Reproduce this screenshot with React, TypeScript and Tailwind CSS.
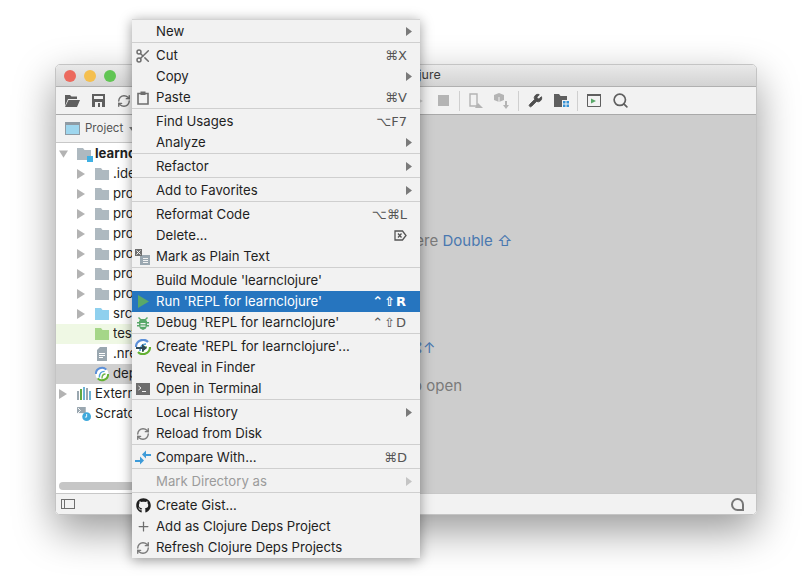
import { Plus, RefreshCw, Scissors, Search, Wrench } from 'lucide-react';
import { FaGithub } from 'react-icons/fa';
import type { ReactNode } from 'react';

const Folder = ({ color = '#aeb9c0' }: { color?: string }) => (
  <svg width="14" height="12" viewBox="0 0 14 12"><path d="M0 0h6l1.5 2H14v10H0z" fill={color} /></svg>
);

const Chevron = ({ color = '#b3b3b3' }: { color?: string }) => (
  <svg width="9" height="10" viewBox="0 0 9 10"><path d="M0 0l8 5-8 5z" fill={color} /></svg>
);

const SubArrow = ({ color }: { color: string }) => (
  <svg className="-mr-[5px]" width="6" height="9" viewBox="0 0 6 9"><path d="M0 0l6 4.500L0 9z" fill={color} /></svg>
);

const ClojureIcon = ({ arrow }: { arrow?: boolean }) => (
  <svg width="16" height="16" viewBox="0 0 16 16">
    <circle cx="8" cy="8" r="7.5" fill="#fff" />
    <path d="M1 8a7 7 0 0 1 12-5" stroke="#5b8fd8" strokeWidth="2.2" fill="none" />
    <path d="M15 8a7 7 0 0 1-12 5" stroke="#63b132" strokeWidth="2.2" fill="none" />
    <path d="M5 12c0-5 3-7 6-7" stroke="#4f9fd8" strokeWidth="1.6" fill="none" />
    <path d="M8 13c0-3 1-5 4-5" stroke="#70b84a" strokeWidth="1.6" fill="none" />
    {arrow && <path d="M1 8h6V5l5 4-5 4v-3H1z" fill="#2f4a57" />}
  </svg>
);

const BugIcon = () => (
  <svg width="14" height="14" viewBox="0 0 14 14">
    <path d="M3 1l2 2h4l2-2 1 1-2 2 1 1v1h2v1.500h-2V9h2v1.500h-2.300L10 12.500 7 14l-3-1.500-.7-2H1V9h2V7.500H1V6h2V5l1-1-2-2z" fill="#59a869" />
    <path d="M4.500 7h5v1.200h-5zM4.500 9.500h5v1.200h-5z" fill="#f2f2f2" />
  </svg>
);

const CompareIcon = () => (
  <svg width="16" height="15" viewBox="0 0 16 15">
    <path d="M0 10h5V6.500l4 4-4 4V12H0z" fill="#3d9bd9" />
    <path d="M16 4h-5V0.500l-4 4 4 4V6h5z" fill="#3d9bd9" />
  </svg>
);

const PasteIcon = () => (
  <svg width="12" height="14" viewBox="0 0 12 14">
    <path d="M1 2.500h10v10.500H1z" fill="none" stroke="#6e6e6e" strokeWidth="1.600" />
    <path d="M3.500 0.500h5v3.500h-5z" fill="#6e6e6e" />
  </svg>
);

const PlainTextIcon = () => (
  <svg width="16" height="16" viewBox="0 0 16 16">
    <path d="M5 6h10v10H5z" fill="#9aa7b0" />
    <path d="M0 0h7v7H0z" fill="#6e6e6e" />
    <path d="M1.500 1.500l4 4m0-4l-4 4" stroke="#f2f2f2" strokeWidth="1" />
    <path d="M8 9h5v1H8zM8 11h5v1H8zM8 13h5v1H8z" fill="#f2f2f2" />
  </svg>
);

const TerminalIcon = () => (
  <svg width="14" height="12" viewBox="0 0 14 12">
    <path d="M0 0h14v12H0z" fill="#6e6e6e" />
    <path d="M2.500 3l2.500 2-2.500 2M6 8.500h4" stroke="#f2f2f2" strokeWidth="1" fill="none" />
  </svg>
);

const DeleteKey = () => (
  <svg width="13" height="11" viewBox="0 0 13 11">
    <path d="M1 1h7.500L12 5.500 8.500 10H1z" fill="none" stroke="#555555" strokeWidth="1.300" />
    <path d="M4 3.500l3.500 4m0-4L4 7.500" stroke="#555555" strokeWidth="1.300" />
  </svg>
);

type Item = {
  label?: string;
  icon?: ReactNode;
  shortcut?: ReactNode;
  wide?: boolean;
  sub?: boolean;
  active?: boolean;
  disabled?: boolean;
};

const menuItems: Item[] = [
  { label: 'New', sub: true },
  {},
  { label: 'Cut', icon: <Scissors size={16} color="#6e6e6e" strokeWidth={2.2} />, shortcut: '⌘X' },
  { label: 'Copy', sub: true },
  { label: 'Paste', icon: <PasteIcon />, shortcut: '⌘V' },
  {},
  { label: 'Find Usages', shortcut: '⌥F7' },
  { label: 'Analyze', sub: true },
  {},
  { label: 'Refactor', sub: true },
  {},
  { label: 'Add to Favorites', sub: true },
  {},
  { label: 'Reformat Code', shortcut: '⌥⌘L' },
  { label: 'Delete...', shortcut: <DeleteKey /> },
  { label: 'Mark as Plain Text', icon: <PlainTextIcon /> },
  {},
  { label: "Build Module 'learnclojure'" },
  {
    label: "Run 'REPL for learnclojure'",
    active: true,
    wide: true,
    shortcut: '⌃⇧R',
    icon: <svg width="11" height="13" viewBox="0 0 11 13"><path d="M0 0l11 6.500L0 13z" fill="#59a869" /></svg>,
  },
  { label: "Debug 'REPL for learnclojure'", icon: <BugIcon />, shortcut: '⌃⇧D', wide: true },
  {},
  { label: "Create 'REPL for learnclojure'...", icon: <ClojureIcon arrow /> },
  { label: 'Reveal in Finder' },
  { label: 'Open in Terminal', icon: <TerminalIcon /> },
  {},
  { label: 'Local History', sub: true },
  { label: 'Reload from Disk', icon: <RefreshCw size={14} color="#7a7a7a" strokeWidth={2.4} /> },
  {},
  { label: 'Compare With...', icon: <CompareIcon />, shortcut: '⌘D' },
  {},
  { label: 'Mark Directory as', sub: true, disabled: true },
  {},
  { label: 'Create Gist...', icon: <FaGithub size={15} color="#1f1f1f" /> },
  { label: 'Add as Clojure Deps Project', icon: <Plus size={15} color="#6e6e6e" strokeWidth={2} /> },
  { label: 'Refresh Clojure Deps Projects', icon: <RefreshCw size={14} color="#7a7a7a" strokeWidth={2.4} /> },
];

function MenuRow({ item }: { item: Item }) {
  if (!item.label) {
    return <div className="mb-[2px] h-px bg-[#cfcfcf]" />;
  }
  const tone = item.active ? 'bg-[#2675bf] text-white' : item.disabled ? 'text-[#9b9b9b]' : 'text-[#1f1f1f]';
  return (
    <div className={`flex h-[21px] items-center pr-[13px] ${tone}`}>
      <span className="flex w-6 shrink-0 items-center justify-center pr-[2px]">{item.icon}</span>
      <span className="flex-1 truncate">{item.label}</span>
      {item.shortcut && (
        <span
          className={`[font-family:'DejaVu_Sans',sans-serif] text-[13px] ${item.wide ? 'tracking-[1px]' : ''} ${item.active ? 'font-bold text-white' : 'text-[#555555]'}`}
        >
          {item.shortcut}
        </span>
      )}
      {item.sub && <SubArrow color={item.disabled ? '#c4c4c4' : '#7a7a7a'} />}
    </div>
  );
}

function TreeRow(props: {
  depth: number;
  arrow?: boolean;
  icon: ReactNode;
  label: string;
  bold?: boolean;
  open?: boolean;
  className?: string;
}) {
  const { depth, arrow, icon, label, bold, open, className } = props;
  return (
    <div className={`flex h-5 items-center ${depth ? 'pl-[21px]' : 'pl-[3px]'} ${className ?? ''}`}>
      <span className="flex w-[9px] shrink-0 justify-center">
        {arrow && (open ? (
          <svg width="10" height="9" viewBox="0 0 10 9"><path d="M0 0h10L5 8z" fill="#b3b3b3" /></svg>
        ) : <Chevron />)}
      </span>
      <span className="ml-[9px] flex w-[14px] shrink-0 items-center justify-center">{icon}</span>
      <span className={`ml-1 truncate ${bold ? 'font-bold' : ''}`}>{label}</span>
    </div>
  );
}

const Slot = ({ children }: { children?: ReactNode }) => (
  <span className="flex h-full w-[26px] shrink-0 items-center justify-center">{children}</span>
);
const ToolSep = () => <span className="mx-[3px] h-[20px] w-px shrink-0 bg-[#cfcfcf]" />;

function Toolbar() {
  return (
    <div className="flex h-7 shrink-0 items-center border-b border-[#a9a9a9] bg-[#f2f2f2] pl-[3px]">
      <Slot>
        <svg width="15" height="12" viewBox="0 0 15 12"><path d="M0 0h5l1.500 1.500H12V4H3L0 11zM3.500 5H15l-3 7H0z" fill="#5f5f5f" /></svg>
      </Slot>
      <Slot>
        <svg width="13" height="13" viewBox="0 0 13 13"><path d="M0 0h13v13H0z" fill="#5f5f5f" /><path d="M2 2h9v3H2zM3 8h7v5H3z" fill="#f2f2f2" /><path d="M6 9h2v4H6z" fill="#5f5f5f" /></svg>
      </Slot>
      <Slot><RefreshCw size={14} color="#6e6e6e" strokeWidth={2.4} /></Slot>
      <span className="w-[267px] shrink-0" />
      <Slot>
        <svg width="11" height="12" viewBox="0 0 11 12"><path d="M0 0l11 6-11 6z" fill="#c9c9c9" /></svg>
      </Slot>
      <Slot><span className="size-[11px] bg-[#b4b4b4]" /></Slot>
      <ToolSep />
      <Slot>
        <svg width="16" height="16" viewBox="0 0 16 16">
          <path d="M2 1h7v12H2z" fill="none" stroke="#b4b4b4" strokeWidth="1.400" />
          <path d="M7 15l3-5 2 2 3 3z" fill="#b4b4b4" />
        </svg>
      </Slot>
      <Slot>
        <svg width="16" height="16" viewBox="0 0 16 16">
          <path d="M5 0l5 2v5L5 9 0 7V2z" fill="#b4b4b4" />
          <path d="M5 4v5" stroke="#f2f2f2" />
          <path d="M11 8h2v4h2l-3 4-3-4h2z" fill="#b4b4b4" />
        </svg>
      </Slot>
      <ToolSep />
      <Slot><Wrench size={15} color="#4f4f4f" fill="#4f4f4f" strokeWidth={1.5} /></Slot>
      <Slot>
        <svg width="15" height="13" viewBox="0 0 15 13">
          <path d="M0 0h5l1.500 2H13v4H8v7H0z" fill="#5f5f5f" />
          <path d="M9 7h2.500v2.500H9zM12.500 7H15v2.500h-2.500zM9 10.500h2.500V13H9zM12.500 10.500H15V13h-2.500z" fill="#3592d6" />
        </svg>
      </Slot>
      <ToolSep />
      <Slot>
        <svg width="14" height="13" viewBox="0 0 14 13">
          <path d="M0.500 0.500h13v12h-13z" fill="none" stroke="#5f5f5f" />
          <path d="M0 0h14v2H0z" fill="#5f5f5f" />
          <path d="M4 4.500l5 2.500-5 2.500z" fill="#59a869" />
        </svg>
      </Slot>
      <Slot><Search size={17} color="#5f5f5f" strokeWidth={2.4} /></Slot>
    </div>
  );
}

function Sidebar() {
  return (
    <aside className="flex w-[240px] shrink-0 flex-col bg-white text-[#1f1f1f]">
      <div className="flex h-7 shrink-0 items-center gap-[5px] border-b border-[#c8c8c8] bg-[#f2f2f2] pl-[9px] text-[11.5px] text-[#555555]">
        <span className="h-[13px] w-[15px] border border-[#8f9ba4] border-t-[3px] bg-[#9ed6ee]" />
        <span>Project</span>
        <svg className="ml-px" width="6" height="4" viewBox="0 0 6 4"><path d="M0 0h6L3 4z" fill="#7a7a7a" /></svg>
      </div>
      <div className="flex-1 pt-px">
        <TreeRow
          depth={0}
          arrow
          open
          bold
          label="learnclojure"
          icon={
            <span className="relative">
              <Folder />
              <span className="absolute right-[-2px] bottom-[-2px] size-[6px] bg-[#3fb0e3]" />
            </span>
          }
        />
        {['.idea', 'project-a', 'project-b', 'project-c', 'project-d', 'project-e', 'project-f'].map((name) => (
          <TreeRow key={name} depth={1} arrow icon={<Folder />} label={name} />
        ))}
        <TreeRow depth={1} arrow icon={<Folder color="#8fd0ee" />} label="src" />
        <TreeRow depth={1} icon={<Folder color="#a5d688" />} label="test" className="bg-[#eff8e4]" />
        <TreeRow
          depth={1}
          label=".nrepl-port"
          icon={
            <svg width="10" height="14" viewBox="0 0 10 14"><path d="M0 3l3-3h7v14H0z" fill="#9aa7b0" /><path d="M2 6h6v1H2zM2 8h6v1H2zM2 10h4v1H2z" fill="#fff" /></svg>
          }
        />
        <TreeRow depth={1} icon={<ClojureIcon />} label="deps.edn" className="bg-[#d0d0d0]" />
        <TreeRow
          depth={0}
          arrow
          label="External Libraries"
          icon={
            <svg width="14" height="14" viewBox="0 0 14 14">
              <path d="M0 4h2v9H0zM9 1h2v12H9z" fill="#9aa7b0" />
              <path d="M3 2h2v11H3z" fill="#5fa842" />
              <path d="M6 0h2v13H6zM12 4h2v9h-2z" fill="#6db3d6" />
            </svg>
          }
        />
        <TreeRow
          depth={0}
          label="Scratches and Consoles"
          icon={
            <svg width="16" height="16" viewBox="0 0 16 16">
              <path d="M0 0h10v7H0z" fill="#9aa7b0" />
              <path d="M1 1l3 3-3 3" stroke="#fff" fill="none" />
              <circle cx="11" cy="11" r="5" fill="#3fa9dc" />
              <path d="M11 8v3.500h-2" stroke="#fff" fill="none" />
            </svg>
          }
        />
      </div>
      <div className="h-[11px] shrink-0 pl-[3px]">
        <div className="h-2 w-[200px] rounded bg-[#c6c6c6]" />
      </div>
    </aside>
  );
}

const Hint = ({ label, keys, className }: { label: string; keys: string; className: string }) => (
  <div className={`h-5 leading-5 ${className}`}>
    {label} <span className="text-[#4a78b0]">{keys}</span>
  </div>
);

export default function App() {
  return (
    <div className="relative h-[588px] w-[812px] overflow-hidden bg-white [font-family:Inter,'DejaVu_Sans',sans-serif] text-[13.2px]">
      <div className="absolute top-[64px] left-[55px] flex h-[451px] w-[702px] flex-col overflow-hidden rounded-[5px] border border-[#c4c4c4] shadow-[0_16px_40px_rgba(0,0,0,0.4)]">
        <div className="relative flex h-[22px] shrink-0 items-center justify-center border-b border-[#b0b0b0] bg-gradient-to-b from-[#e9e9e9] to-[#d3d3d3] text-[12.5px] text-[#3c3c3c]">
          <div className="absolute top-[5px] left-2 flex gap-2">
            <span className="size-3 rounded-full bg-[#ec6a5e]" />
            <span className="size-3 rounded-full bg-[#f4bf4f]" />
            <span className="size-3 rounded-full bg-[#61c554]" />
          </div>
          learnclojure
        </div>
        <Toolbar />
        <div className="flex min-h-0 flex-1">
          <Sidebar />
          <main className="flex-1 bg-[#cdcdcd] pt-[116px] pl-1 text-[15px] text-[#7a7a7a]">
            <Hint label="Search Everywhere" keys="Double ⇧" className="" />
            <Hint label="Go to File" keys="⇧⌘O" className="mt-4" />
            <Hint label="Recent Files" keys="⌘E" className="mt-4" />
            <Hint label="Navigation Bar" keys="⌘↑" className="mt-[15px]" />
            <div className="mt-[18px] h-5 leading-5">Drop files here to open</div>
          </main>
        </div>
        <div className="flex h-[21px] shrink-0 items-center justify-between border-t border-[#c8c8c8] bg-[#f2f2f2] pr-3 pl-[5px]">
          <span className="flex h-[10px] w-[14px] border border-[#6e6e6e]">
            <span className="w-[3px] border-r border-[#6e6e6e]" />
          </span>
          <span className="size-[13px] rounded-full rounded-br-none border-2 border-[#777777]" />
        </div>
      </div>

      <div className="absolute top-[19px] left-[132px] w-[288px] border-t border-[#d4d4d4] bg-[#f2f2f2] pt-px shadow-[0_2px_12px_rgba(0,0,0,0.4)]">
        {menuItems.map((item, i) => (
          <MenuRow key={i} item={item} />
        ))}
      </div>
    </div>
  );
}
